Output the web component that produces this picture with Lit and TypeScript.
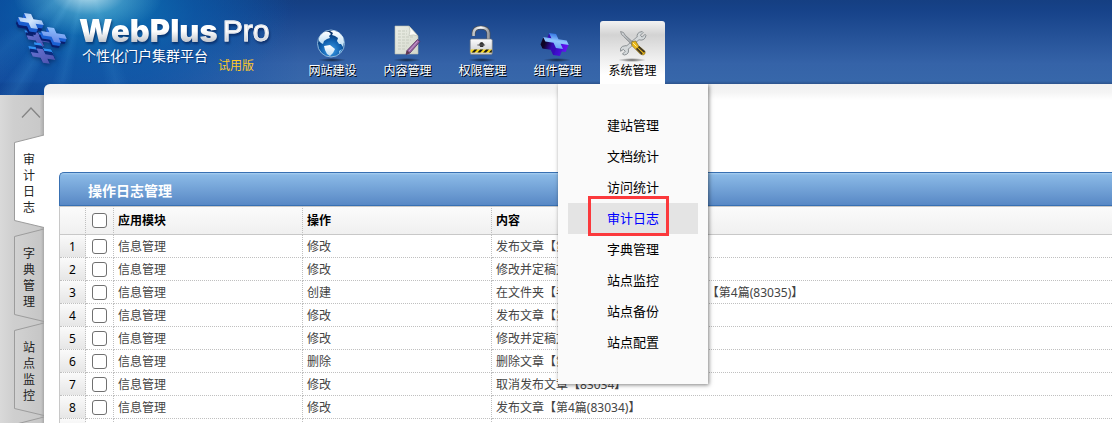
import { LitElement, html, svg, css } from "lit";
import { customElement, property } from "lit/decorators.js";
import { classMap } from "lit/directives/class-map.js";

const PLUS = "M-.3 -1H.3V-.3H1V.3H.3V1H-.3V.3H-1V-.3H-.3Z";

// A plus sign lying in perspective, given thickness by stacking copies behind the face.
// A negative depth puts the thickness above the face instead of below it.
const solidPlus = (x: number, y: number, s: number, depth: number, side: string, dark: string, face: string) => {
  const place = (px: number, py: number) =>
    `matrix(${11.5 * s} ${1.8 * s} ${3.4 * s} ${7.4 * s} ${px} ${py})`;
  const size = Math.abs(depth);
  const layers = [];
  for (let i = size * 2; i > 0; i--) {
    const k = i / 2;
    layers.push(svg`<path d=${PLUS} fill=${k > size * 0.6 ? dark : side}
      transform=${place(x - k * 0.4, y + k * Math.sign(depth))}></path>`);
  }
  return svg`${layers}<path d=${PLUS} fill=${face} transform=${place(x, y)}></path>`;
};

const shadow = svg`<ellipse cx="18" cy="37" rx="14" ry="2" fill="url(#sh)"></ellipse>`;
const shadowDef = svg`<radialGradient id="sh"><stop offset="0" stop-color="#000" stop-opacity=".6"></stop><stop offset="1" stop-color="#000" stop-opacity="0"></stop></radialGradient>`;

const icons: Record<string, unknown> = {
  globe: svg`
    <defs>${shadowDef}
      <radialGradient id="sea" cx=".5" cy=".75" r=".75"><stop offset="0" stop-color="#3fa0e8"></stop><stop offset=".5" stop-color="#0f5fae"></stop><stop offset="1" stop-color="#04204e"></stop></radialGradient>
      <linearGradient id="land" x2="0" y2="1"><stop offset="0" stop-color="#fff"></stop><stop offset="1" stop-color="#b9dcf4"></stop></linearGradient>
    </defs>${shadow}
    <g transform="translate(-2 0)">
    <circle cx="19" cy="20.500" r="13.500" fill="url(#sea)" stroke="#8fb9dd" stroke-width="1"></circle>
    <path d="M7 15Q9 10 14 8.500L17 9L19 11L17 13L18 15L15 16L12 18L11 21L9 20L7 18Z" fill="url(#land)"></path>
    <path d="M18 8L22 7.500L27 9.500L31 14L32 19L31 24L29 21L27 21L25 18L26 15L23 13L20 12L21 10Z" fill="url(#land)"></path>
    <path d="M12 23L18 22L23 26L21 30L18 33L15 31L13 27Z" fill="url(#land)"></path>
    <path d="M27 28L30 26L27 31Z" fill="#8cc4ee"></path>
    </g>`,
  page: svg`
    <defs>${shadowDef}
      <linearGradient id="pg" x2="1" y2="1"><stop offset="0" stop-color="#eceee6"></stop><stop offset="1" stop-color="#d3d8cb"></stop></linearGradient>
    </defs>${shadow}
    <g transform="translate(-2 0)">
    <path d="M8 3H22L31 13V31H8Z" fill="url(#pg)" stroke="#b9beb0" stroke-width=".6"></path>
    <path d="M22 3L31 13Q27 11 22 12.500Q24 8 22 3Z" fill="#fafbf7" stroke="#aeb3a6" stroke-width=".5"></path>
    <path d="M11 8H20M11 11H20M11 14H26M11 17H24M11 20H22M11 23H20M11 26H18" stroke="#c6cbbf" stroke-width="1" stroke-dasharray="3 1"></path>
    <path d="M30.500 16.500L33 18.500L23 30L19 31.500L20 27.500Z" fill="#9a66a4" stroke="#573062" stroke-width=".8"></path>
    <path d="M30.500 18.500L22 28" stroke="#cba0d0" stroke-width="1"></path>
    <path d="M19 31.500L20 27.500L23 30Z" fill="#5d3a4e"></path>
    </g>`,
  lock: svg`
    <defs>${shadowDef}
      <linearGradient id="lk" x2="0" y2="1"><stop offset="0" stop-color="#fcfcfc"></stop><stop offset="1" stop-color="#c5c8cc"></stop></linearGradient>
      <linearGradient id="bar"><stop offset="0" stop-color="#bfc3c7"></stop><stop offset=".5" stop-color="#fff"></stop><stop offset="1" stop-color="#9a9ea4"></stop></linearGradient>
    </defs>${shadow}
    <g transform="translate(-1 0) scale(.96 1)">
    <path d="M11 13V10Q11.500 4.500 18.500 4.500Q26 4.500 26.500 10V18" fill="none" stroke="#4c5056" stroke-width="4"></path>
    <path d="M11 13V10Q11.500 4.500 18.500 4.500Q26 4.500 26.500 10V18" fill="none" stroke="url(#bar)" stroke-width="2.600"></path>
    <rect x="7.500" y="16" width="23" height="15.500" rx="1.500" fill="url(#lk)" stroke="#777b80" stroke-width=".7"></rect>
    <rect x="8" y="26.500" width="22" height="3" fill="#f8d716"></rect>
    <path d="M9 29.500L12 26.500H15L12 29.500ZM15 29.500L18 26.500H21L18 29.500ZM21 29.500L24 26.500H27L24 29.500ZM27 29.500L30 26.500V29.500Z" fill="#181818"></path>
    <path d="M17 22Q17 19 20 19L22 21L21 24H18Z" fill="#333"></path><path d="M15 22H23" stroke="#555" stroke-width="1"></path>
    </g>`,
  plus: svg`<defs>${shadowDef}
      <linearGradient id="pf" x2="0" y2="1"><stop offset="0" stop-color="#3578e4"></stop><stop offset=".5" stop-color="#8ec4ff"></stop><stop offset="1" stop-color="#6aa8f6"></stop></linearGradient>
      <linearGradient id="ps"><stop offset="0" stop-color="#0c0420"></stop><stop offset=".4" stop-color="#3a0cc8"></stop><stop offset="1" stop-color="#6412f4"></stop></linearGradient>
    </defs>${shadow}
    ${solidPlus(17, 18, 1.02, 7, "url(#ps)", "url(#ps)", "url(#pf)")}`,
  tools: svg`
    <defs>${shadowDef}
      <linearGradient id="st" x2="1" y2="1"><stop offset="0" stop-color="#d9dcde"></stop><stop offset="1" stop-color="#8f9498"></stop></linearGradient>
    </defs>${shadow}
    <g transform="translate(0 1) scale(.94)">
    <path d="M12 27L28 13" stroke="#868b8f" stroke-width="4.400"></path>
    <path d="M25 15Q23 9 30 8L31 9L28 12L30 14L33 11L34 12Q33 18 27 17Z" fill="#d4d8da" stroke="#7d8286" stroke-width=".9"></path>
    <path d="M15 26Q17 32 11 33L9 32L12 29L10 27L7 29L7 26Q8 23 13 23Z" fill="#d4d8da" stroke="#7d8286" stroke-width=".9"></path>
    <path d="M12 27L28 13" stroke="#d4d8da" stroke-width="3"></path>
    <path d="M7 8L10 9L12 12L22 21L20 23L10 13L8 11Z" fill="url(#st)" stroke="#6b7074" stroke-width=".7"></path>
    <path d="M19 19L23 18L26 23L33 29Q34 32 31 33L28 32L19 23Z" fill="#e8b61a" stroke="#6b5514" stroke-width=".6"></path>
    <path d="M26 24L32.500 30M24 26L30 32" stroke="#3b3426" stroke-width="1.800"></path>
    <path d="M20 20L24 24" stroke="#fff0a0" stroke-width="1"></path>
    </g>`,
};

@customElement("brand-mark")
class BrandMark extends LitElement {
  static styles = css`
    :host { display: block; width: 54px; height: 54px; }
    svg { display: block; overflow: visible; filter: drop-shadow(1px 2px 2px rgba(0, 20, 70, 0.5)); }
  `;
  render() {
    return html`<svg width="54" height="54" viewBox="0 0 54 54" aria-hidden="true">
      <defs>
        <linearGradient id="a" x2="1" y2="1"><stop offset="0" stop-color="#8fb8f0"></stop><stop offset=".5" stop-color="#d3e6fd"></stop><stop offset="1" stop-color="#6f9fea"></stop></linearGradient>
        <linearGradient id="b" x2="1" y2="1"><stop offset="0" stop-color="#6a78d6"></stop><stop offset="1" stop-color="#474ca8"></stop></linearGradient>
        <linearGradient id="c" x2="0" y2="1"><stop offset="0" stop-color="#8fc0fd"></stop><stop offset="1" stop-color="#6688e6"></stop></linearGradient>
      </defs>
      ${solidPlus(21, 26, 0.92, -5, "#0c2470", "#2f86ea", "url(#b)")}
      ${solidPlus(26, 43, 0.98, -6, "#0c2c80", "#3191f2", "url(#b)")}
      ${solidPlus(14, 8, 1.02, 6, "#1c5fd0", "#0a1f70", "url(#a)")}
      ${solidPlus(37, 22, 1.02, 5, "#1c62d4", "#0a1f70", "url(#c)")}
    </svg>`;
  }
}

@customElement("nav-icon")
class NavIcon extends LitElement {
  static styles = css`
    :host { display: block; }
    svg { display: block; overflow: visible; }
  `;
  @property() name = "";
  render() {
    return html`<svg width="37" height="38" viewBox="0 0 37 38" aria-hidden="true">${icons[this.name]}</svg>`;
  }
}

const NAV = [
  { label: "网站建设", icon: "globe" },
  { label: "内容管理", icon: "page" },
  { label: "权限管理", icon: "lock" },
  { label: "组件管理", icon: "plus" },
  { label: "系统管理", icon: "tools" },
];
const MENU = ["建站管理", "文档统计", "访问统计", "审计日志", "字典管理", "站点监控", "站点备份", "站点配置"];
const TABS = ["审计日志", "字典管理", "站点监控", "站点备份"];
const ROWS = [
  ["修改", "发布文章【第4篇(83034)】"],
  ["修改", "修改并定稿文章【第4篇(83034)】"],
  ["创建", "在文件夹【手机网站新闻1】下创建文章【第4篇(83035)】"],
  ["修改", "发布文章【第4篇(83034)】"],
  ["修改", "修改并定稿文章【第4篇(83034)】"],
  ["删除", "删除文章【第4篇(83034)】"],
  ["修改", "取消发布文章【83034】"],
  ["修改", "发布文章【第4篇(83034)】"],
  ["修改", "发布文章【第4篇(83034)】"],
];

@customElement("app-root")
class AppRoot extends LitElement {
  static styles = css`
    :host {
      display: flex;
      flex-direction: column;
      height: 100vh;
      overflow: hidden;
      background: #fff;
      color: #444;
      font: 12px/16px "Noto Sans", "Noto Sans CJK SC", sans-serif;
    }
    * { box-sizing: border-box; }
    a { color: inherit; text-decoration: none; }
    ul { list-style: none; margin: 0; padding: 0; }

    .header {
      flex: none;
      display: flex;
      align-items: flex-start;
      height: 95px;
      background:
        radial-gradient(ellipse 75px 42px at 88px -6px, rgba(215, 245, 250, 0.85), rgba(120, 200, 225, 0.4) 50%, transparent),
        conic-gradient(from 180deg at 88px -30px, transparent 8deg, rgba(90, 180, 235, 0.12) 13deg, transparent 18deg, transparent 26deg, rgba(90, 180, 235, 0.16) 31deg, transparent 37deg, rgba(90, 180, 235, 0.1) 47deg, transparent 54deg, transparent 340deg, rgba(90, 180, 235, 0.1) 346deg, transparent 352deg),
        radial-gradient(ellipse 190px 105px at 100px 10px, rgba(14, 125, 185, 0.85), rgba(10, 100, 175, 0.5) 50%, transparent),
        linear-gradient(90deg, rgba(8, 62, 150, 0.75), rgba(8, 72, 160, 0.65) 150px, transparent 300px),
        linear-gradient(#153f82, #17438a 12px, #3563a8 64px, #3767aa 81px, #2c538c 84px);
    }
    .brand { display: flex; flex: none; width: 300px; padding: 13px 0 0 17px; }
    .words { padding-left: 8px; }
    .name {
      display: flex;
      gap: 5px;
      margin: 0;
      font: 900 31px/36px Inter, sans-serif;
      filter: drop-shadow(1px 2px 1px rgba(0, 20, 70, 0.55));
    }
    .name span {
      color: transparent;
      background: linear-gradient(#fff 50%, #bfc3ca 82%);
      background-clip: text;
      -webkit-background-clip: text;
    }
    .name .pro { font: 30px/36px "Liberation Sans", sans-serif; -webkit-text-stroke: 1px #e4e7ec; }
    .sub { display: flex; gap: 10px; padding-left: 3px; color: #fff; }
    .slogan { font-size: 14px; line-height: 14px; text-shadow: 1px 1px 1px rgba(0, 20, 70, 0.5); }
    .trial { padding-top: 9px; color: #ffc926; }

    .nav { display: flex; gap: 10px; padding-top: 21px; }
    .item { position: relative; width: 65px; }
    .link {
      display: flex;
      flex-direction: column;
      align-items: center;
      height: 63px;
      padding-top: 2px;
      color: #fff;
      line-height: 20px;
      text-shadow: 1px 1px 0 #000;
      border-radius: 3px 3px 0 0;
    }
    .link.on {
      color: #000;
      text-shadow: none;
      background: linear-gradient(#f2f2f2, #d3d3d3 14px, #ededed 36px, #fff 54px);
    }
    .menu {
      position: absolute;
      z-index: 2;
      top: 100%;
      left: -42px;
      width: 150px;
      padding: 26px 10px;
      background: #fafafa;
      box-shadow: 1px 1px 4px rgba(0, 0, 0, 0.5);
      clip-path: inset(0 -8px -8px -8px);
    }
    .menu a { display: block; color: #000; font-size: 13px; line-height: 31px; text-align: center; }
    .menu .current { background: #e4e4e4; color: #00f; }
    .marker {
      position: absolute;
      top: 112px;
      left: 30px;
      width: 81px;
      height: 40px;
      border: 3px solid #fb393c;
    }

    .body { flex: 1; min-height: 0; display: flex; margin-top: -11px; }
    .side {
      flex: none;
      width: 44px;
      padding-top: 11px;
    }
    .rail {
      height: 100%;
      background: linear-gradient(90deg, #d9d9d9, #cfcfcf 30%, #c9c9c9 90%, #a9a9a9);
      overflow: hidden;
    }
    .up { display: flex; width: 100%; height: 39px; padding: 12px 0 0 21px; border: 0; background: none; }
    .up svg { display: block; }
    .tab { display: grid; height: 94px; padding-left: 14px; }
    .tab svg, .tab span { grid-area: 1 / 1; }
    .tab svg { display: block; }
    .tab span { width: 12px; margin: 18px 0 0 9px; color: #222; word-break: break-all; }

    .panel {
      flex: 1;
      min-width: 0;
      padding: 88px 0 0 15px;
      overflow: hidden;
      background: linear-gradient(#f1f1f1, #f4f4f4 8px, #fff 16px);
      border-top-left-radius: 6px;
    }
    .title {
      height: 34px;
      margin: 0;
      padding-left: 28px;
      border: 1px solid #3870b2;
      border-right: 0;
      border-top-left-radius: 5px;
      background: linear-gradient(#a9cff0, #8ab9e6 2px, #5888c5);
      color: #fff;
      font-size: 14px;
      line-height: 35px;
    }
    table { width: 100%; table-layout: fixed; border-collapse: separate; border-spacing: 0; border-left: 1px solid #c8c8c8; }
    th, td { padding: 0 0 0 4px; border-right: 1px dotted #c0c0c0; text-align: left; white-space: nowrap; }
    th { height: 29px; border-top: 1px solid #c8c8c8; border-bottom: 1px solid #c8c8c8; color: #000; background: linear-gradient(#fbfbfb, #f0f0f0); }
    td { height: 23px; padding-top: 2px; border-bottom: 1px dotted #c0c0c0; }
    th:last-child, td:last-child { border-right: 0; }
    .c-num { width: 26px; }
    .c-box { width: 28px; }
    .c-mid { width: 189px; }
    td.num { padding-left: 0; color: #000; text-align: center; background: linear-gradient(#fafafa, #e6e6e6); }
    .box { padding: 0; }
    input {
      appearance: none;
      display: block;
      width: 15px;
      height: 15px;
      margin: 0 auto;
      border: 1px solid #707070;
      border-radius: 3px;
      background: #fff;
    }
  `;

  render() {
    return html`
      <header class="header">
        <div class="brand">
          <brand-mark></brand-mark>
          <div class="words">
            <h1 class="name"><span>WebPlus</span><span class="pro">Pro</span></h1>
            <div class="sub"><span class="slogan">个性化门户集群平台</span><span class="trial">试用版</span></div>
          </div>
        </div>
        <nav>
          <ul class="nav">
            ${NAV.map((n, i) => html`<li class="item">
              <a href="#" class=${classMap({ link: true, on: i === 4 })}><nav-icon name=${n.icon}></nav-icon>${n.label}</a>
              ${i === 4
                ? html`<div class="menu">
                    <ul>${MENU.map((m) => html`<li><a href="#" class=${classMap({ current: m === "审计日志" })}>${m}</a></li>`)}</ul>
                    <div class="marker"></div>
                  </div>`
                : null}
            </li>`)}
          </ul>
        </nav>
      </header>
      <div class="body">
        <aside class="side"><div class="rail">
          <button class="up" aria-label="向上">
            <svg width="20" height="12" viewBox="0 0 20 12"><path d="M1 10.500L10 1L19 10.500" fill="none" stroke="#858585" stroke-width="1.300"></path></svg>
          </button>
          ${TABS.map((t, i) => html`<a href="#" class="tab">
            <svg width="30" height="94" viewBox="0 0 30 94" aria-hidden="true">
              <defs><linearGradient id="t"><stop offset="0" stop-color="#d2d2d2"></stop><stop offset=".9" stop-color="#c6c6c6"></stop><stop offset="1" stop-color="#a9a9a9"></stop></linearGradient></defs>
              <path d="M30 1L.5 8.500V86.500L30 93.500" fill=${i === 0 ? "#fff" : "url(#t)"} stroke="#9c9c9c" stroke-width="1"></path>
            </svg>
            <span>${t}</span>
          </a>`)}
        </div></aside>
        <main class="panel">
          <h2 class="title">操作日志管理</h2>
          <table>
            <colgroup><col class="c-num" /><col class="c-box" /><col class="c-mid" /><col class="c-mid" /><col /></colgroup>
            <thead><tr>
              <th></th>
              <th class="box"><input type="checkbox" aria-label="全选" /></th>
              <th>应用模块</th><th>操作</th><th>内容</th>
            </tr></thead>
            <tbody>
              ${ROWS.map(([op, text], i) => html`<tr>
                <td class="num">${i + 1}</td>
                <td class="box"><input type="checkbox" aria-label="选择第${i + 1}行" /></td>
                <td>信息管理</td><td>${op}</td><td>${text}</td>
              </tr>`)}
            </tbody>
          </table>
        </main>
      </div>
    `;
  }
}
